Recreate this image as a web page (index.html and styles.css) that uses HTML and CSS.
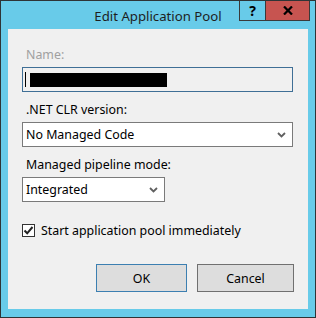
FILE: index.html
```html
<!DOCTYPE html>
<html>
  <head>
    <meta charset="utf-8">
    <title>Edit Application Pool</title>
    <link rel="stylesheet" href="styles.css">
</head>
<body>
    <div class="window">
        <div class="titlebar">
            <div class="title">Edit Application Pool</div>
            <div class="caption-buttons">
                <div class="btn-help">?</div>
                <div class="btn-close">
                    <svg width="10" height="9" viewBox="0 0 10 9">
                        <path d="M1 0.5 L9 8.5 M9 0.5 L1 8.5" stroke="#000" stroke-width="2.2" fill="none"/>
                    </svg>
                </div>
            </div>
        </div>

        <div class="client">
            <div class="field">
                <label class="label disabled" for="name">Name:</label>
                <div class="textbox" id="name">
                    <span class="caret"></span>
                    <span class="redacted"></span>
                </div>
            </div>

            <div class="field">
                <label class="label" for="clr">.NET CLR version:</label>
                <div class="combo wide" id="clr">
                    <span>No Managed Code</span>
                    <svg class="chevron" width="9" height="6" viewBox="0 0 9 6">
                        <path d="M1 1 L4.5 4.5 L8 1" stroke="#606060" stroke-width="1.8" fill="none"/>
                    </svg>
                </div>
            </div>

            <div class="field">
                <label class="label" for="pipeline">Managed pipeline mode:</label>
                <div class="combo narrow" id="pipeline">
                    <span>Integrated</span>
                    <svg class="chevron" width="9" height="6" viewBox="0 0 9 6">
                        <path d="M1 1 L4.5 4.5 L8 1" stroke="#606060" stroke-width="1.8" fill="none"/>
                    </svg>
                </div>
            </div>

            <div class="check-row">
                <div class="checkbox">
                    <svg width="11" height="11" viewBox="0 0 11 11">
                        <path d="M1.5 5.5 L4.2 8.3 L9.5 2" stroke="#222" stroke-width="2" fill="none"/>
                    </svg>
                </div>
                <span>Start application pool immediately</span>
            </div>

            <div class="buttons">
                <div class="button default">OK</div>
                <div class="button cancel">Cancel</div>
            </div>
        </div>
    </div>
</body>
</html>
```

FILE: styles.css
```css
* {
    box-sizing: border-box;
}
body {
    margin: 0;
    font-family: "Noto Sans", "Open Sans", sans-serif;
    font-size: 12.4px;
    color: #000;
}
.window {
    position: relative;
    width: 316px;
    height: 318px;
    background: #68cbe9;
    border: 1px solid #2e3436;
}
.titlebar {
    height: 28px;
    display: flex;
    justify-content: center;
    align-items: center;
}
.title {
    font-size: 13.2px;
    color: #1e1e1e;
    padding-top: 1px;
}
.caption-buttons {
    position: absolute;
    top: 0;
    right: 5px;
    display: flex;
}
.btn-help {
    width: 27px;
    height: 20px;
    border: 1px solid #3a3a3a;
    border-top: none;
    background: #68cbe9;
    font-weight: bold;
    font-size: 14px;
    display: flex;
    align-items: center;
    justify-content: center;
    line-height: 1;
}
.btn-close {
    width: 44px;
    height: 20px;
    border-right: 1px solid #3a3a3a;
    border-bottom: 1px solid #3a3a3a;
    background: #c75450;
    display: flex;
    align-items: center;
    justify-content: center;
}
.client {
    margin: 0 7px;
    height: 280px;
    background: #f0f0f0;
    padding: 17px 14px 0 14px;
}
.field {
    display: flex;
    flex-direction: column;
    align-items: flex-start;
    margin-bottom: 9px;
}
.label {
    line-height: 17px;
    margin-bottom: 4px;
    padding-left: 4px;
}
.disabled {
    color: #a0a0a0;
}
.textbox {
    width: 271px;
    height: 25px;
    border: 1px solid #3f6f96;
    display: flex;
    align-items: center;
    padding-left: 2px;
}
.caret {
    width: 1px;
    height: 15px;
    background: #000;
    margin-right: 4px;
}
.redacted {
    width: 137px;
    height: 14px;
    background: #000;
}
.combo {
    height: 25px;
    border: 1px solid #7a7a7a;
    background: #fff;
    display: flex;
    align-items: center;
    justify-content: space-between;
    padding: 0 6px 0 3px;
}
.wide {
    width: 271px;
}
.narrow {
    width: 143px;
}
.check-row {
    display: flex;
    align-items: center;
    height: 17px;
    margin-top: 20px;
}
.checkbox {
    width: 13px;
    height: 13px;
    border: 1px solid #333;
    background: #fff;
    display: flex;
    align-items: center;
    justify-content: center;
    margin-right: 6px;
}
.buttons {
    display: flex;
    justify-content: flex-end;
    gap: 10px;
    margin-top: 25px;
}
.button {
    height: 28px;
    border: 1px solid #707070;
    background: #dddddd;
    display: flex;
    align-items: center;
    justify-content: center;
}
.default {
    width: 91px;
    border-color: #3c7fb1;
}
.cancel {
    width: 97px;
}
```
